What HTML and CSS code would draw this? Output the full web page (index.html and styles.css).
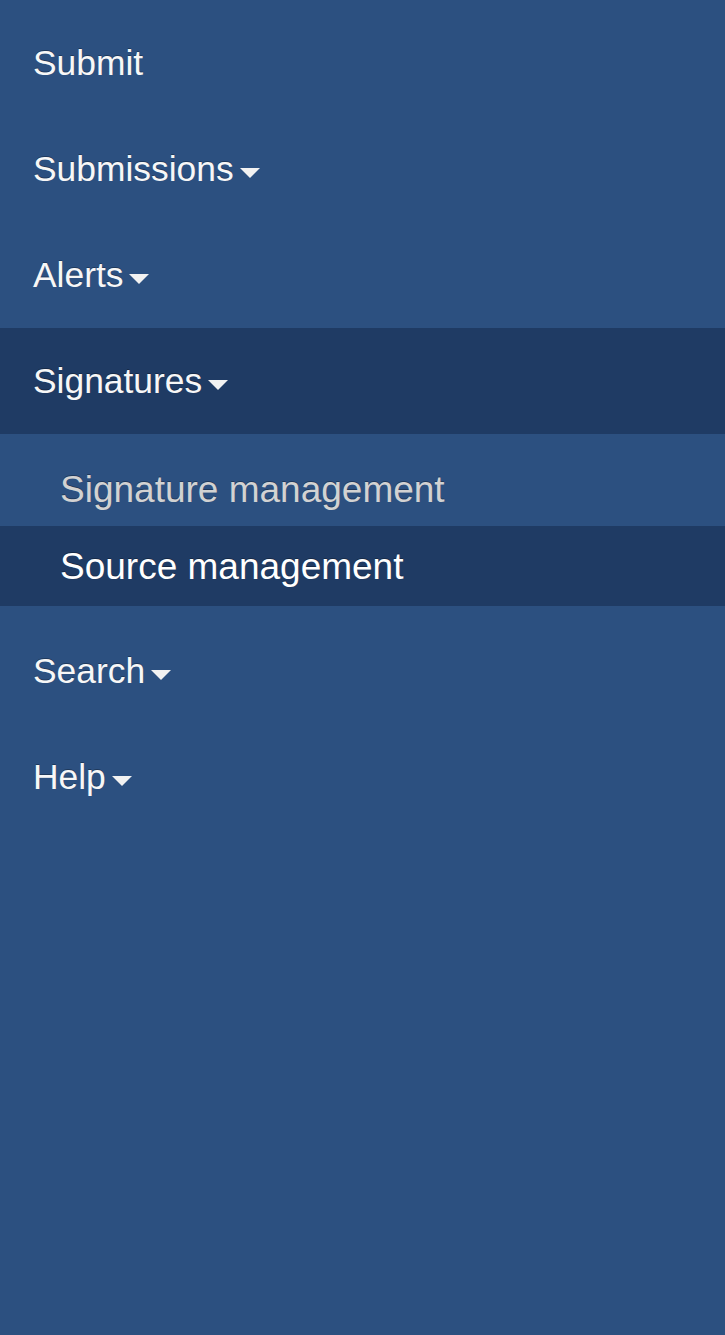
FILE: index.html
```html
<!DOCTYPE html>
<html lang="en">
<head>
<meta charset="utf-8">
<title>Menu</title>
<link rel="stylesheet" href="styles.css">
</head>
<body>
<nav class="menu">
  <ul class="nav">
    <li class="nav-item"><a class="nav-link" href="#">Submit</a></li>
    <li class="nav-item"><a class="nav-link" href="#">Submissions<span class="caret"></span></a></li>
    <li class="nav-item"><a class="nav-link" href="#">Alerts<span class="caret"></span></a></li>
    <li class="nav-item open">
      <a class="nav-link active" href="#">Signatures<span class="caret"></span></a>
      <ul class="submenu">
        <li><a class="sub-link" href="#">Signature management</a></li>
        <li><a class="sub-link current" href="#">Source management</a></li>
      </ul>
    </li>
    <li class="nav-item"><a class="nav-link" href="#">Search<span class="caret"></span></a></li>
    <li class="nav-item"><a class="nav-link" href="#">Help<span class="caret"></span></a></li>
  </ul>
</nav>
</body>
</html>
```
FILE: styles.css
```css
html, body {
  margin: 0;
  padding: 0;
  height: 100%;
  background: #2c5080;
}
body {
  font-family: "Liberation Sans", Arial, sans-serif;
}
.menu {
  padding-top: 10px;
}
.nav, .submenu {
  list-style: none;
  margin: 0;
  padding: 0;
}
.nav-link {
  display: flex;
  align-items: center;
  height: 106px;
  padding: 1px 0 0 33px;
  box-sizing: border-box;
  font-size: 35.4px;
  color: #f7f7f7;
  text-decoration: none;
  text-shadow: 0 -1px 0 rgba(0, 0, 0, 0.3);
}
.nav-link.active {
  background: #1f3b64;
}
.caret {
  display: inline-block;
  width: 0;
  height: 0;
  margin-left: 6px;
  margin-top: 6px;
  border-top: 10px solid #f2f2f2;
  border-left: 10px solid transparent;
  border-right: 10px solid transparent;
}
.submenu {
  padding: 12px 0;
}
.sub-link {
  display: flex;
  align-items: center;
  height: 80px;
  padding: 2px 0 0 60px;
  box-sizing: border-box;
  font-size: 37px;
  color: #d2d2d2;
  text-decoration: none;
  text-shadow: 0 -1px 0 rgba(0, 0, 0, 0.3);
}
.sub-link.current {
  background: #1f3b64;
  color: #ffffff;
}
.submenu li:first-child .sub-link {
  margin-top: -12px;
  height: 92px;
  padding-top: 19px;
}
```
